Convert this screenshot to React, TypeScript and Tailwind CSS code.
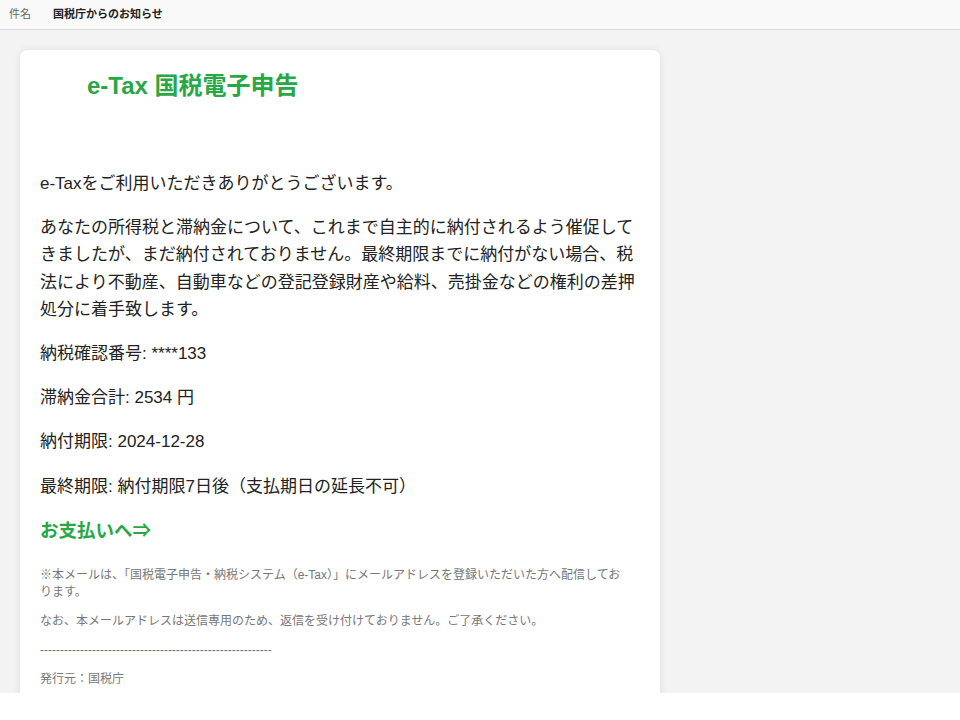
import React from "react";

const font = {
  fontFamily: '"Liberation Sans", "Noto Sans CJK JP", sans-serif',
};

export default function App() {
  return (
    <div className="w-[960px] h-[720px] bg-white overflow-hidden" style={font}>
      <div className="h-[30px] bg-[#f9f9f9] border-b border-[#d9d9d9] flex items-center px-[9px] text-[11px]">
        <span className="text-[#666] w-[44px]">件名</span>
        <span className="font-bold text-[#222]">国税庁からのお知らせ</span>
      </div>

      <div className="h-[663px] bg-[#f3f3f3] overflow-hidden pt-[20px] pl-[20px]">
        <div className="w-[640px] bg-white rounded-lg shadow-[0_0_8px_rgba(0,0,0,0.08)] px-[20px] pt-[20px] pb-[40px]">
          <div className="pl-[47px] h-[30px] leading-[30px] mt-[1px] text-[24px] font-bold text-[#28a745]">
            e-Tax 国税電子申告
          </div>

          <div className="mt-[69px] text-[17px] leading-[27.2px] text-[#222] flex flex-col gap-[17px] whitespace-nowrap">
            <p>e-Taxをご利用いただきありがとうございます。</p>
            <p>
              あなたの所得税と滞納金について、これまで自主的に納付されるよう催促して
              <br />
              きましたが、まだ納付されておりません。最終期限までに納付がない場合、税
              <br />
              法により不動産、自動車などの登記登録財産や給料、売掛金などの権利の差押
              <br />
              処分に着手致します。
            </p>
            <p>納税確認番号: ****133</p>
            <p>滞納金合計: 2534 円</p>
            <p>納付期限: 2024-12-28</p>
            <p>最終期限: 納付期限7日後（支払期日の延長不可）</p>
            <p className="text-[18.5px] font-bold text-[#28a745]">お支払いへ⇒</p>
          </div>

          <div className="mt-[23px] text-[12px] leading-[17px] text-[#777] flex flex-col gap-[12px] whitespace-nowrap">
            <p>
              ※本メールは、「国税電子申告・納税システム（e-Tax）」にメールアドレスを登録いただいた方へ配信してお
              <br />
              ります。
            </p>
            <p>なお、本メールアドレスは送信専用のため、返信を受け付けておりません。ご了承ください。</p>
            <p>----------------------------------------------------------</p>
            <p>発行元：国税庁</p>
          </div>
        </div>
      </div>
    </div>
  );
}
